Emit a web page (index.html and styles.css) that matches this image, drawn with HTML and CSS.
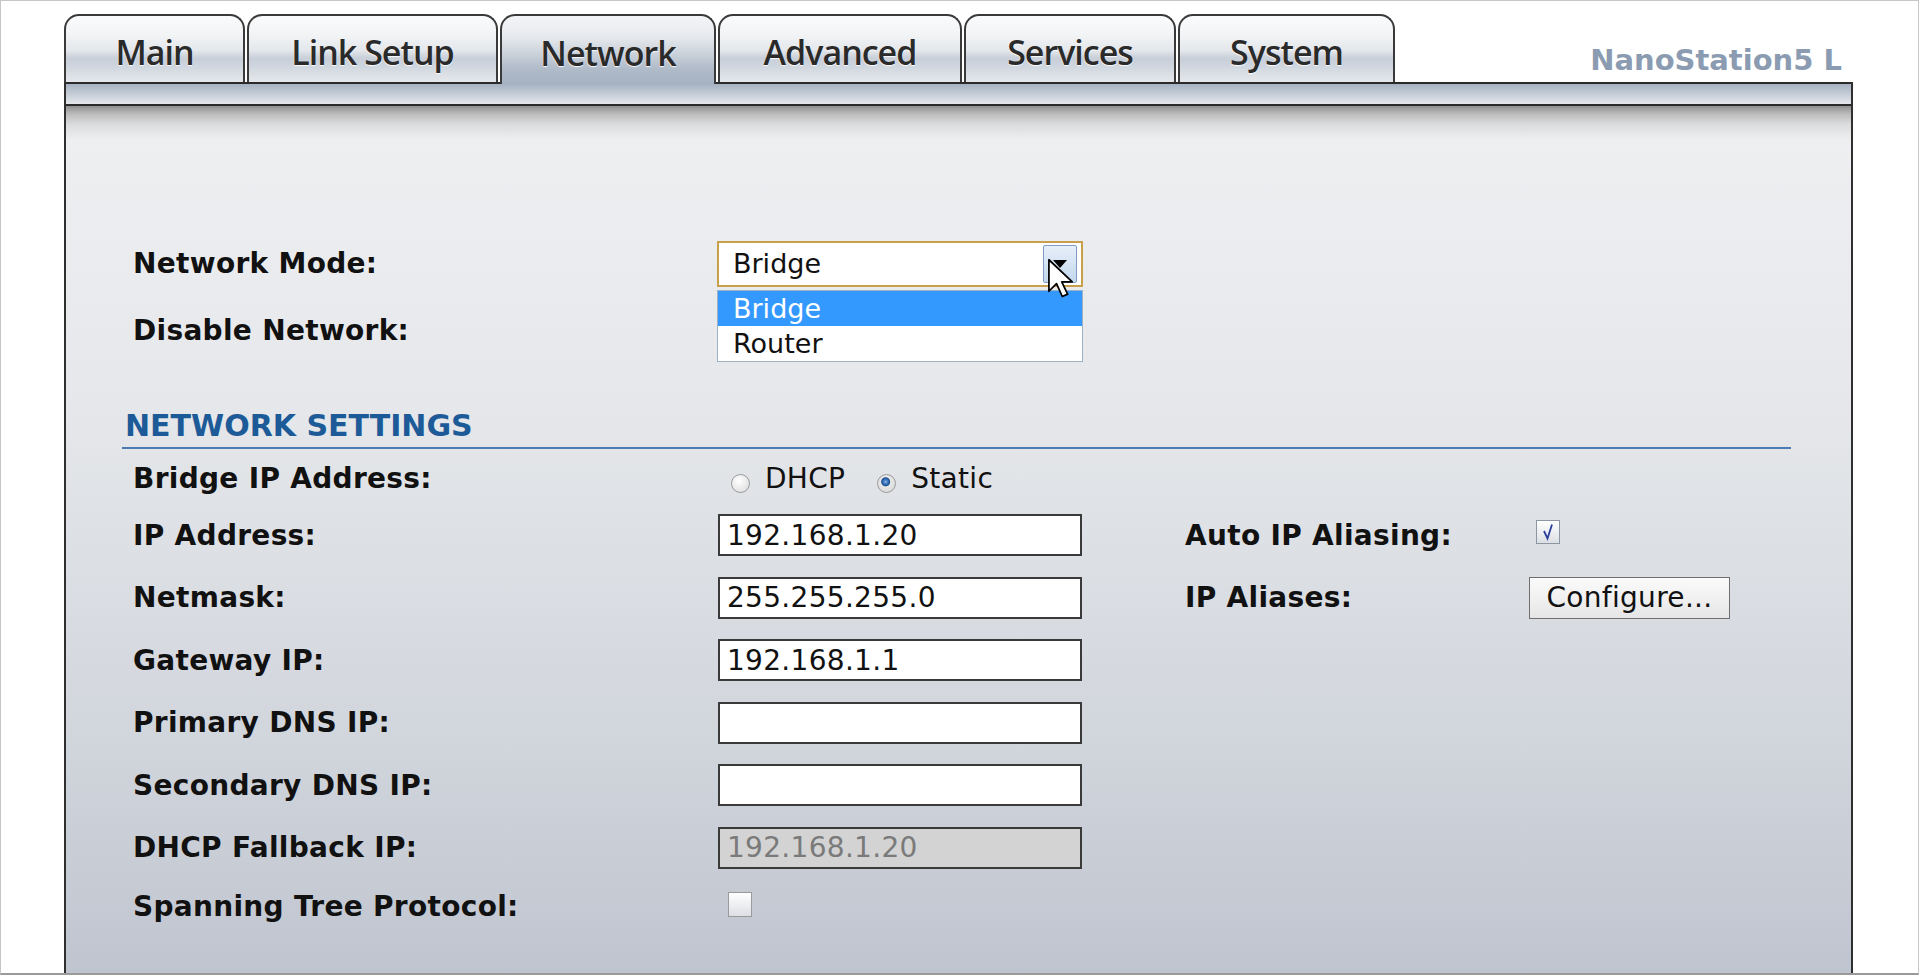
FILE: index.html
```html
<!DOCTYPE html>
<html lang="en">
<head>
    <meta charset="UTF-8">
    <title>NanoStation5 L - Network</title>
    <link rel="stylesheet" href="styles.css">
</head>
<body>
    <div class="screen">
        <div class="header">
            <nav class="tabs">
                <a class="tab tab-main">Main</a>
                <a class="tab tab-link">Link Setup</a>
                <a class="tab tab-network active">Network</a>
                <a class="tab tab-advanced">Advanced</a>
                <a class="tab tab-services">Services</a>
                <a class="tab tab-system">System</a>
            </nav>
            <div class="device-name">NanoStation5 L</div>
        </div>

        <div class="panel">
            <div class="bar"></div>
            <div class="content">
                <div class="mode-row">
                    <span class="label">Network Mode:</span>
                    <div class="select">
                        <div class="select-box">
                            <span>Bridge</span>
                            <span class="select-btn">
                                <svg width="14" height="8" viewBox="0 0 14 8"><path d="M0 0h14L7 8z" fill="#000"/></svg>
                            </span>
                        </div>
                        <ul class="select-list">
                            <li class="selected">Bridge</li>
                            <li>Router</li>
                        </ul>
                        <!-- mouse pointer over the open list -->
                        <svg class="cursor" width="26" height="42" viewBox="0 0 22 36">
                            <path d="M1.5 1.5v27l6.5-6.5 5 11 4.5-2-5-10.5h9z" fill="#fff" stroke="#000" stroke-width="1.5" stroke-linejoin="round"/>
                        </svg>
                    </div>
                </div>
                <div class="mode-row">
                    <span class="label">Disable Network:</span>
                </div>

                <h2 class="section-title">NETWORK SETTINGS</h2>

                <div class="settings">
                    <span class="label">Bridge IP Address:</span>
                    <div class="radios">
                        <label class="radio"><input type="radio" name="ipmode"> DHCP</label>
                        <label class="radio"><input type="radio" name="ipmode" checked> Static</label>
                    </div>

                    <span class="label">IP Address:</span>
                    <input class="text" type="text" value="192.168.1.20">
                    <span class="rlabel">Auto IP Aliasing:</span>
                    <span class="checkbox checkbox-auto checked">
                        <svg width="24" height="24" viewBox="0 0 24 24"><path d="M8 11l3.5 7.5L16 4.5" fill="none" stroke="#2c3f9e" stroke-width="1.8"/></svg>
                    </span>

                    <span class="label">Netmask:</span>
                    <input class="text" type="text" value="255.255.255.0">
                    <span class="rlabel">IP Aliases:</span>
                    <button class="button">Configure...</button>

                    <span class="label">Gateway IP:</span>
                    <input class="text" type="text" value="192.168.1.1">

                    <span class="label">Primary DNS IP:</span>
                    <input class="text" type="text" value="">

                    <span class="label">Secondary DNS IP:</span>
                    <input class="text" type="text" value="">

                    <span class="label">DHCP Fallback IP:</span>
                    <input class="text" type="text" value="192.168.1.20" disabled>

                    <span class="label">Spanning Tree Protocol:</span>
                    <span class="checkbox checkbox-stp"></span>
                </div>
            </div>
        </div>
    </div>
</body>
</html>
```

FILE: styles.css
```css
body { margin: 0; background: #fff; font-family: "DejaVu Sans", Verdana, sans-serif; color: #111; }
.screen { height: 975px; box-sizing: border-box; border: 1px solid #c6c6c6; border-bottom: 2px solid #9a9a9a; overflow: hidden; }

/* top tabs */
.header { display: flex; align-items: flex-end; height: 81px; padding: 0 76px 0 63px; }
.tabs { display: flex; align-items: flex-end; gap: 2px; }
.tab { display: flex; align-items: center; justify-content: center; box-sizing: border-box; height: 68px; padding-top: 5px; border: 2px solid #3a3a3a; border-bottom: 0; border-radius: 15px 15px 0 0; background: linear-gradient(#fbfbfc 0%, #f1f3f5 30%, #e4e7eb 52%, #c8cfd9 64%, #cdd4dd 74%, #dde1e6 90%, #e4e7ea 100%); font-family: "Open Sans", sans-serif; font-size: 34px; font-weight: 600; letter-spacing: -1px; color: #2a2a2a; text-shadow: 0 1px 1px rgba(255,255,255,0.9); text-decoration: none; }
.tab.active { height: 70px; margin-bottom: -2px; position: relative; z-index: 1; background: linear-gradient(#f3f4f6 0%, #e7eaed 30%, #cbd2db 55%, #b0bbc9 78%, #a6b2c2 100%); }
.tab-main { width: 181px; }
.tab-link { width: 251px; }
.tab-network { width: 216px; }
.tab-advanced { width: 244px; }
.tab-services { width: 212px; }
.tab-system { width: 217px; }
.device-name { margin-left: auto; align-self: flex-start; margin-top: 45px; font-size: 29px; line-height: 1; font-weight: bold; color: #8b9bb1; }

/* framed panel */
.panel { margin-left: 63px; width: 1789px; box-sizing: border-box; border-left: 2px solid #2f2f2f; border-right: 2px solid #2f2f2f; }
.bar { height: 20px; border-top: 2px solid #2a2a2a; border-bottom: 2px solid #2a2a2a; background: linear-gradient(#a6b2c2, #e4e7eb); }
.content { height: 900px; padding: 124px 0 0 67px; background: linear-gradient(#8f8f8f 0, #bcbcbc 8px, #dadbdc 18px, rgba(238,239,241,0) 34px) top / 100% 34px no-repeat, linear-gradient(#eff0f2 0%, #e5e7ea 30%, #d1d5dc 62%, #b3bac7 100%); }

.label, .rlabel { font-size: 28px; font-weight: bold; letter-spacing: 0.3px; white-space: nowrap; }
.label { grid-column: 1; }

/* network mode */
.mode-row { display: grid; grid-template-columns: 584px 1fr; align-items: center; height: 67px; }
.select { position: relative; width: 366px; font-size: 27px; }
.select-box { display: flex; align-items: center; box-sizing: border-box; height: 46px; padding: 0 4px 0 14px; border: 2px solid #c8a04c; background: #fff; }
.select-btn { display: flex; align-items: center; justify-content: center; margin-left: auto; width: 34px; height: 38px; box-sizing: border-box; border: 1px solid #7e9cc4; border-radius: 2px; background: linear-gradient(#e6eff9, #c3d7ee); }
.select-list { position: absolute; top: calc(100% + 3px); left: 0; width: 100%; box-sizing: border-box; margin: 0; padding: 0; list-style: none; border: 1px solid #9fb0c4; background: #fff; z-index: 2; }
.select-list li { height: 35px; line-height: 35px; padding-left: 15px; }
.select-list li.selected { background: #3399ff; color: #fff; }
.cursor { position: absolute; left: 330px; top: 17px; z-index: 3; }

/* network settings */
.section-title { width: 1669px; box-sizing: border-box; margin: 44px 0 0 -11px; padding: 0 0 3px 3px; font-size: 30px; line-height: 36px; font-weight: bold; color: #1d5a98; border-bottom: 2px solid #4a7cb3; }
.settings { display: grid; grid-template-columns: 585px 467px 344px 1fr; grid-template-rows: 52px repeat(6, 62.5px) 54px; align-items: center; margin-top: 3px; }
.rlabel { grid-column: 3; }

.text { width: 364px; height: 42px; box-sizing: border-box; margin: 0; padding: 0 7px; border: 2px solid #3a3a3a; background: #fff; font-family: inherit; font-size: 28px; letter-spacing: 0.3px; color: #111; }
.text:disabled { background: #d3d3d3; color: #7a7a7a; }

.radios { display: flex; align-items: center; font-size: 28px; letter-spacing: 0.3px; }
.radio { display: flex; align-items: center; gap: 15px; margin-left: 13px; }
.radio + .radio { margin-left: 32px; }
.radio input { appearance: none; -webkit-appearance: none; width: 19px; height: 19px; margin: 10px 0 0; border: 1px solid #9b9b9b; border-radius: 50%; background: radial-gradient(circle at 40% 35%, #fff 0, #e4e4e4 70%, #cfcfcf 100%); }
.radio input:checked { background: radial-gradient(circle at 45% 40%, #7fb2e6 0, #2a66ad 3px, #1d4f8f 4px, #e8e8e8 5px, #d2d2d2 100%); }

.checkbox { display: block; width: 24px; height: 24px; box-sizing: border-box; border: 1px solid #8e96a3; background: linear-gradient(#ffffff, #dcdfe4); }
.checkbox svg { display: block; margin: -1px; }
.checkbox-auto { margin: 0 0 6px 7px; }
.checkbox-stp { height: 25px; margin: 0 0 4px 10px; border-color: #9a9a9a; }

.button { width: 201px; height: 42px; padding: 0; border: 1px solid #6f6f6f; background: linear-gradient(#fbfbfb, #e6e6e6); font-family: inherit; font-size: 28px; letter-spacing: 0.3px; color: #111; }
```
